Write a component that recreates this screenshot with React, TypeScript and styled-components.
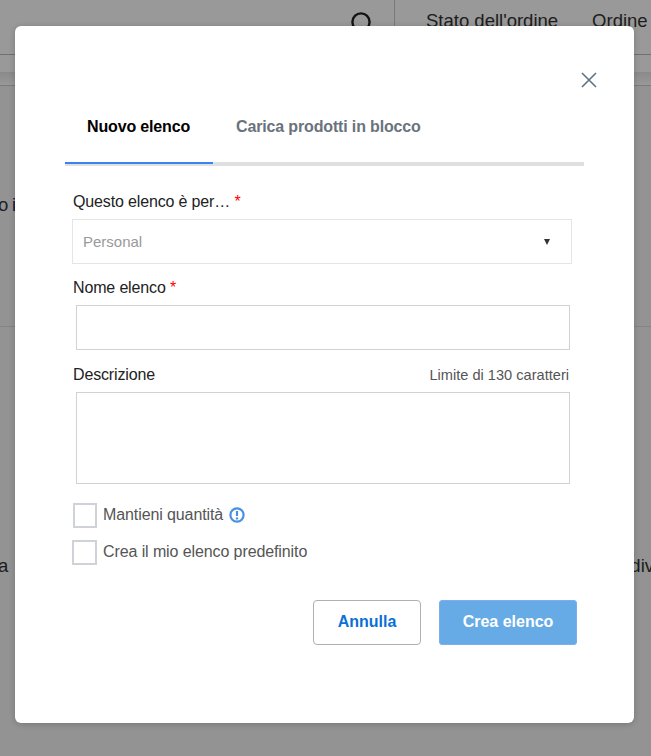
import React from "react";
import styled, { createGlobalStyle } from "styled-components";

const GlobalStyle = createGlobalStyle`
  html, body {
    margin: 0;
    padding: 0;
    height: 100%;
    overflow: hidden;
    font-family: "Liberation Sans", Arial, sans-serif;
  }
`;

export default function App() {
  return (
    <>
      <GlobalStyle />
      <ScPage>
        <ScHeader>
          <ScSearchIcon viewBox="0 0 24 24">
            <circle cx="11" cy="11" r="8.6" />
            <path d="M17 17L22 22" />
          </ScSearchIcon>
          <ScHeaderLinks>
            <span>Stato dell'ordine</span>
            <span>Ordine</span>
          </ScHeaderLinks>
        </ScHeader>
        <ScSubHeader />
        <ScPageRow $top={109}>
          <ScPageText>
            o <ScPageLink>i</ScPageLink>
          </ScPageText>
        </ScPageRow>
        <ScDivider $top={119} />
        <ScPageRow $top={229}>
          <span>a</span>
          <span>div</span>
        </ScPageRow>
      </ScPage>

      <ScOverlay />

      <ScModal>
        <ScCloseRow>
          <ScCloseButton aria-label="Chiudi">
            <svg width="16" height="16" viewBox="0 0 16 16">
              <path d="M1 1L15 15M15 1L1 15" />
            </svg>
          </ScCloseButton>
        </ScCloseRow>

        <ScTabs>
          <ScTab $active>Nuovo elenco</ScTab>
          <ScTab>Carica prodotti in blocco</ScTab>
        </ScTabs>

        <ScForm>
          <ScLabelRow $gap={27}>
            <ScLabel>
              Questo elenco è per… <ScRequired>*</ScRequired>
            </ScLabel>
          </ScLabelRow>
          <ScSelect>
            <span>Personal</span>
            <ScCaret />
          </ScSelect>

          <ScLabelRow $gap={15}>
            <ScLabel>
              Nome elenco <ScRequired>*</ScRequired>
            </ScLabel>
          </ScLabelRow>
          <ScInput type="text" />

          <ScLabelRow $gap={16}>
            <ScLabel>Descrizione</ScLabel>
            <ScHint>Limite di 130 caratteri</ScHint>
          </ScLabelRow>
          <ScTextarea />

          <ScCheckRow $first>
            <ScCheckbox $indent={1} />
            <ScCheckLabel>Mantieni quantità</ScCheckLabel>
            <ScInfoIcon viewBox="0 0 16 16">
              <circle cx="8" cy="8" r="6.6" fill="none" stroke="#4a90e2" strokeWidth="2.2" />
              <path d="M8 4V9" stroke="#4a90e2" strokeWidth="2.2" />
              <circle cx="8" cy="11.4" r="1.2" fill="#4a90e2" />
            </ScInfoIcon>
          </ScCheckRow>
          <ScCheckRow>
            <ScCheckbox />
            <ScCheckLabel>Crea il mio elenco predefinito</ScCheckLabel>
          </ScCheckRow>

          <ScActions>
            <ScCancel>Annulla</ScCancel>
            <ScSubmit>Crea elenco</ScSubmit>
          </ScActions>
        </ScForm>
      </ScModal>
    </>
  );
}

const ScPage = styled.div`
  position: fixed;
  inset: 0;
  background: #f5f5f5;
  color: #333;
  font-size: 18.5px;
  overflow: hidden;
`;

const ScHeader = styled.header`
  display: flex;
  justify-content: flex-end;
  align-items: flex-start;
  height: 55px;
  background: #fff;
  border-bottom: 1px solid #bbb;
  box-sizing: border-box;
`;

const ScSearchIcon = styled.svg`
  width: 24px;
  height: 24px;
  margin: 11px 20px 0 0;
  fill: none;
  stroke: #222;
  stroke-width: 2.4;
`;

const ScHeaderLinks = styled.div`
  display: flex;
  gap: 34px;
  height: 100%;
  width: 257px;
  box-sizing: border-box;
  padding: 10px 0 0 31px;
  border-left: 1px solid #ccc;
  white-space: nowrap;
  overflow: hidden;
`;

const ScSubHeader = styled.div`
  height: 31px;
  border-bottom: 1px solid #ccc;
  box-sizing: border-box;
  background: linear-gradient(#fff 0, #fff 17px, #e6e6e6 17px, #fff 30px);
`;

const ScPageRow = styled.div<{ $top: number }>`
  display: flex;
  justify-content: space-between;
  margin: ${({ $top }) => $top}px -3px 0 -2px;
  height: 20px;
  line-height: 20px;
  color: #333;
`;

const ScPageText = styled.span`
  word-spacing: -1.5px;
`;

const ScPageLink = styled.span`
  color: #23235f;
`;

const ScDivider = styled.div<{ $top: number }>`
  margin-top: ${({ $top }) => $top - 8}px;
  height: 1px;
  background: #ddd;
`;

const ScOverlay = styled.div`
  position: fixed;
  inset: 0;
  background: rgba(0, 0, 0, 0.4);
`;

const ScModal = styled.div`
  position: fixed;
  left: 15px;
  top: 26px;
  width: 619px;
  height: 697px;
  box-sizing: border-box;
  padding: 0 50px;
  background: #fff;
  border-radius: 6px;
  box-shadow: 0 1px 6px rgba(0, 0, 0, 0.2);
`;

const ScCloseRow = styled.div`
  display: flex;
  justify-content: flex-end;
  padding-top: 46px;
  margin-right: -13px;
  height: 16px;
`;

const ScCloseButton = styled.button`
  display: block;
  border: 0;
  padding: 0;
  background: none;
  height: 16px;
  svg {
    display: block;
    fill: none;
    stroke: #5f7382;
    stroke-width: 1.6;
  }
`;

const ScTabs = styled.div`
  display: flex;
  margin-top: 15px;
  height: 59px;
  border-bottom: 4px solid #dfe0e1;
`;

const ScTab = styled.div<{ $active?: boolean }>`
  width: ${({ $active }) => ($active ? "148px" : "auto")};
  box-sizing: border-box;
  padding: 14px 0 0 ${({ $active }) => ($active ? "22px" : "23px")};
  font-size: 16px;
  line-height: 20px;
  font-weight: 700;
  letter-spacing: -0.15px;
  color: ${({ $active }) => ($active ? "#000" : "#6a737c")};
  border-bottom: ${({ $active }) => ($active ? "2px solid #3b82f0" : "0")};
  height: ${({ $active }) => ($active ? "61px" : "auto")};
`;

const ScForm = styled.form`
  display: block;
`;

const ScLabelRow = styled.div<{ $gap: number }>`
  display: flex;
  justify-content: space-between;
  align-items: center;
  height: 18px;
  margin-top: ${({ $gap }) => $gap}px;
  padding: 0 15px 0 8px;
`;

const ScLabel = styled.label`
  font-size: 16px;
  line-height: 18px;
  letter-spacing: -0.15px;
  color: #222;
`;

const ScRequired = styled.span`
  color: #f00;
`;

const ScHint = styled.span`
  font-size: 14.6px;
  color: #555;
`;

const ScSelect = styled.div`
  display: flex;
  justify-content: space-between;
  align-items: center;
  box-sizing: border-box;
  height: 45px;
  width: 500px;
  margin: 8px 0 0 7px;
  padding: 0 21px 0 10px;
  border: 1px solid #e5e5e5;
  font-size: 15px;
  color: #999;
`;

const ScCaret = styled.i`
  width: 0;
  height: 0;
  border-left: 3px solid transparent;
  border-right: 3px solid transparent;
  border-top: 6px solid #333;
`;

const ScInput = styled.input`
  display: block;
  box-sizing: border-box;
  width: 494px;
  height: 45px;
  margin: 8px 0 0 11px;
  border: 1px solid #cfd2d6;
  background: #fff;
`;

const ScTextarea = styled.textarea`
  display: block;
  box-sizing: border-box;
  width: 494px;
  height: 92px;
  margin: 8px 0 0 11px;
  border: 1px solid #cfd2d6;
  background: #fff;
  resize: none;
`;

const ScCheckRow = styled.div<{ $first?: boolean }>`
  display: flex;
  align-items: center;
  gap: 6px;
  height: 25px;
  margin-top: ${({ $first }) => ($first ? "19px" : "12px")};
  padding-left: 7px;
`;

const ScCheckbox = styled.span<{ $indent?: number }>`
  display: block;
  box-sizing: border-box;
  width: ${({ $indent }) => ($indent ? "24px" : "25px")};
  height: 25px;
  margin-left: ${({ $indent }) => $indent ?? 0}px;
  border: 2px solid #cfd3d8;
`;

const ScCheckLabel = styled.span`
  font-size: 16px;
  letter-spacing: -0.1px;
  padding-bottom: 2px;
  color: #555;
`;

const ScInfoIcon = styled.svg`
  width: 16px;
  height: 16px;
  margin-bottom: 1px;
`;

const ScActions = styled.div`
  display: flex;
  gap: 18px;
  justify-content: flex-end;
  margin: 35px -43px 0 0;
  padding-right: 50px;
`;

const ScCancel = styled.button`
  width: 108px;
  height: 45px;
  padding-bottom: 3px;
  border: 1px solid #b0b0b0;
  border-radius: 4px;
  background: #fff;
  color: #0a6fd6;
  font: 700 16px "Liberation Sans", Arial, sans-serif;
`;

const ScSubmit = styled.button`
  width: 138px;
  height: 45px;
  padding-bottom: 3px;
  border: 1px solid #7aaef0;
  border-radius: 3px;
  background: #66abe5;
  color: #fff;
  font: 700 16px "Liberation Sans", Arial, sans-serif;
`;
